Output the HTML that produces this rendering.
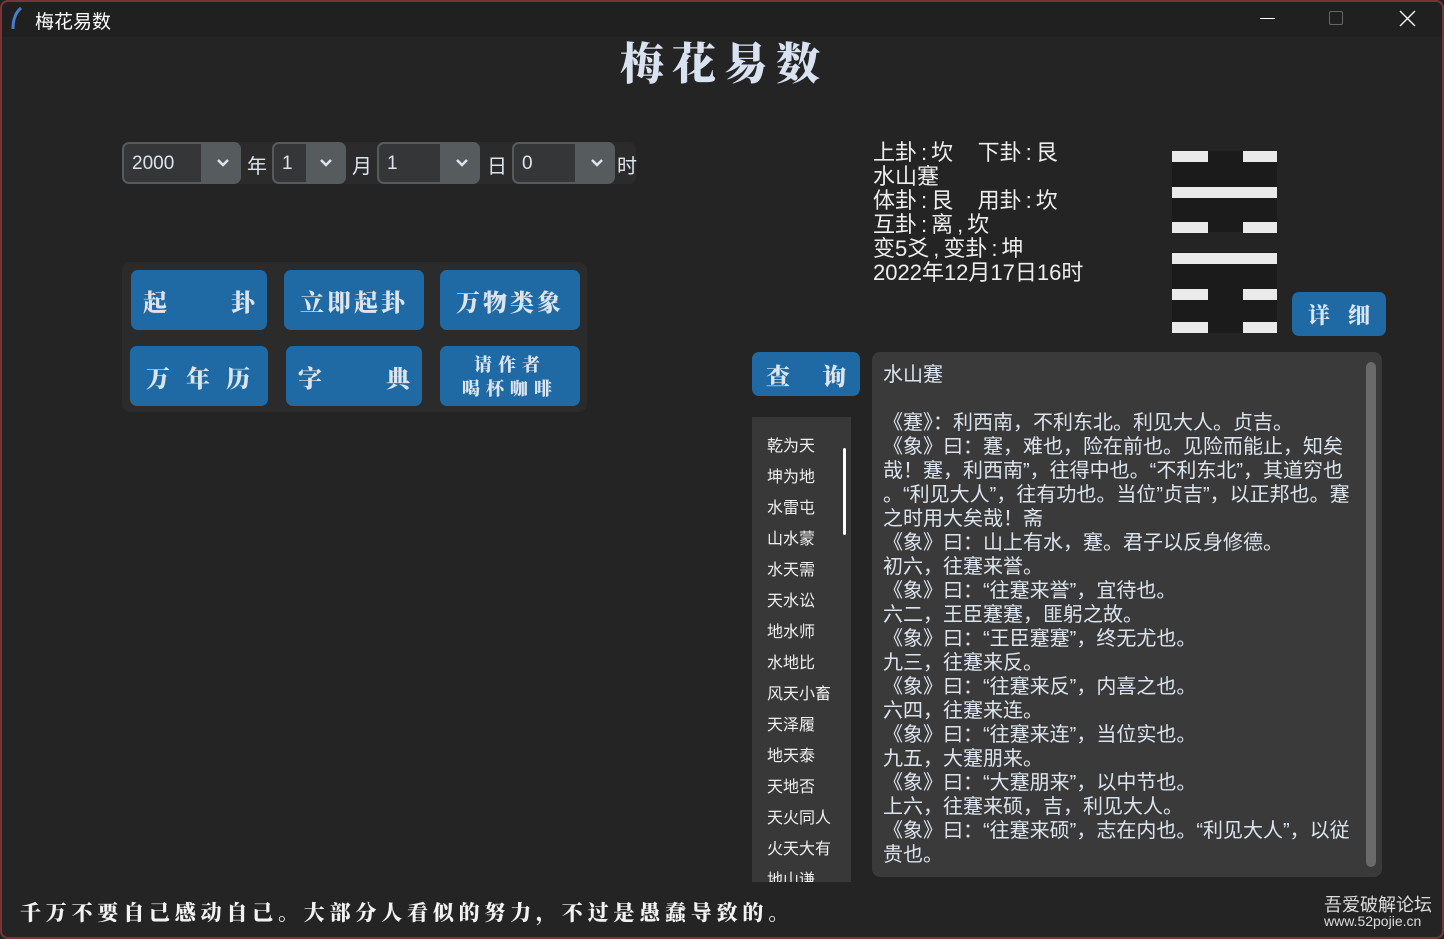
<!DOCTYPE html>
<html><head><meta charset="utf-8"><style>
*{margin:0;padding:0;box-sizing:border-box}
body{width:1444px;height:939px;background:#242424;overflow:hidden;position:relative;font-family:"Liberation Sans","Noto Sans CJK SC",sans-serif;color:#dce4ee}
.abs{position:absolute}
.frame{position:absolute;left:0;top:0;width:1444px;height:939px;border:2px solid #7a3436;border-radius:8px;pointer-events:none}
.title{left:0;top:0;width:1444px;height:37px;background:#202020}
.cal{font-family:"Noto Serif CJK SC","Liberation Serif",serif;font-weight:900}
.btn{position:absolute;background:#1f6aa5;border-radius:7px;color:#dce4ee;font-family:"Noto Serif CJK SC",serif;font-weight:900;font-size:24px;display:flex;align-items:center;white-space:nowrap}
.combo{position:absolute;top:142px;height:42px;border:2px solid #565b5e;border-radius:7px;background:#565b5e;overflow:hidden}
.combo .e{position:absolute;left:0;top:0;bottom:0;background:#343638;font-size:19px;line-height:40px;padding-left:8px;color:#dce4ee}
.combo svg{position:absolute;top:14px}
.lbl{position:absolute;top:150px;font-size:20px}
.info{left:873px;top:141px;font-size:22px;line-height:24px;color:#eee;white-space:nowrap}
.info i{font-style:normal;margin:0 4px}
.bar{position:absolute;background:#eaeaea;height:11px}
.txt{left:872px;top:352px;width:510px;height:525px;background:#3a3a3a;border-radius:8px}
.txt pre{position:absolute;left:11px;top:11px;font-family:"Liberation Sans","Noto Sans CJK SC",sans-serif;font-size:20px;line-height:24px;color:#dce4ee;white-space:pre}
.list{left:752px;top:417px;width:99px;height:465px;background:#383838;overflow:hidden}
.list div{position:absolute;left:15px;font-size:16px;color:#f0f0f0}
</style></head><body>
<div class="abs title"></div>
<svg class="abs" style="left:10px;top:7px" width="14" height="24" viewBox="0 0 14 24"><path d="M11 1 C5 6 3 14 3 22" stroke="#4a7bd0" stroke-width="3" fill="none"/><path d="M3 22 L2 24" stroke="#222" stroke-width="1.5"/></svg>
<div class="abs" style="left:35px;top:7px;font-size:19px;color:#fff">梅花易数</div>
<div class="abs" style="left:1260px;top:18px;width:15px;height:1px;background:#fff"></div>
<div class="abs" style="left:1329px;top:11px;width:14px;height:14px;border:1px solid #666;border-radius:2px"></div>
<svg class="abs" style="left:1399px;top:10px" width="17" height="17"><path d="M1 1L16 16M16 1L1 16" stroke="#fff" stroke-width="1.4"/></svg>

<div class="abs cal" style="left:620px;top:28px;font-size:44px;letter-spacing:8px;color:#d8e2f0">梅花易数</div>

<div class="abs" style="left:122px;top:142px;width:514px;height:42px;background:#2b2b2b;border-radius:7px"></div>
<div class="combo" style="left:122px;width:119px"><div class="e" style="width:77px">2000</div><svg style="left:92px" width="14" height="10"><path d="M2 2L7 7L12 2" stroke="#dce4ee" stroke-width="2.5" fill="none"/></svg></div>
<div class="lbl" style="left:247px">年</div>
<div class="combo" style="left:272px;width:74px"><div class="e" style="width:32px">1</div><svg style="left:45px" width="14" height="10"><path d="M2 2L7 7L12 2" stroke="#dce4ee" stroke-width="2.5" fill="none"/></svg></div>
<div class="lbl" style="left:352px">月</div>
<div class="combo" style="left:377px;width:103px"><div class="e" style="width:61px">1</div><svg style="left:76px" width="14" height="10"><path d="M2 2L7 7L12 2" stroke="#dce4ee" stroke-width="2.5" fill="none"/></svg></div>
<div class="lbl" style="left:487px">日</div>
<div class="combo" style="left:512px;width:103px"><div class="e" style="width:61px">0</div><svg style="left:76px" width="14" height="10"><path d="M2 2L7 7L12 2" stroke="#dce4ee" stroke-width="2.5" fill="none"/></svg></div>
<div class="lbl" style="left:617px">时</div>

<div class="abs" style="left:122px;top:262px;width:465px;height:150px;background:#2b2b2b;border-radius:8px"></div>
<div class="btn" style="left:131px;top:270px;width:136px;height:60px;justify-content:space-between;padding:0 12px">
<span>起</span><span>卦</span></div>
<div class="btn" style="left:284px;top:270px;width:140px;height:60px;justify-content:center;letter-spacing:3px">立即起卦</div>
<div class="btn" style="left:440px;top:270px;width:140px;height:60px;justify-content:center;letter-spacing:3px">万物类象</div>
<div class="btn" style="left:130px;top:346px;width:138px;height:60px;justify-content:center;letter-spacing:16px;padding-left:14px">万年历</div>
<div class="btn" style="left:286px;top:346px;width:136px;height:60px;justify-content:space-between;padding:0 12px">
<span>字</span><span>典</span></div>
<div class="btn" style="left:440px;top:346px;width:140px;height:60px;flex-direction:column;justify-content:center;font-size:18px;line-height:24px;letter-spacing:6px">
<span>请作者</span><span>喝杯咖啡</span></div>

<div class="abs info">上卦<i>:</i>坎&nbsp;&nbsp;&nbsp;&nbsp;下卦<i>:</i>艮<br>水山蹇<br>体卦<i>:</i>艮&nbsp;&nbsp;&nbsp;&nbsp;用卦<i>:</i>坎<br>互卦<i>:</i>离<i>,</i>坎<br>变5爻<i>,</i>变卦<i>:</i>坤<br>2022年12月17日16时</div>

<div class="abs" style="left:1172px;top:151px;width:105px;height:81px;background:#1b1b1b"></div>
<div class="abs" style="left:1172px;top:252px;width:105px;height:81px;background:#1b1b1b"></div>
<div class="bar" style="left:1172px;top:151px;width:36px"></div><div class="bar" style="left:1243px;top:151px;width:34px"></div>
<div class="bar" style="left:1172px;top:187px;width:105px"></div>
<div class="bar" style="left:1172px;top:222px;width:36px"></div><div class="bar" style="left:1243px;top:222px;width:34px"></div>
<div class="bar" style="left:1172px;top:253px;width:105px"></div>
<div class="bar" style="left:1172px;top:289px;width:36px"></div><div class="bar" style="left:1243px;top:289px;width:34px"></div>
<div class="bar" style="left:1172px;top:322px;width:36px"></div><div class="bar" style="left:1243px;top:322px;width:34px"></div>

<div class="btn" style="left:1292px;top:292px;width:94px;height:44px;justify-content:center;letter-spacing:18px;padding-left:18px;font-size:22px">详细</div>
<div class="btn" style="left:752px;top:352px;width:108px;height:44px;justify-content:space-between;padding:0 14px;font-size:24px"><span>查</span><span>询</span></div>

<div class="abs list">
<div style="top:15px">乾为天</div><div style="top:46px">坤为地</div><div style="top:77px">水雷屯</div><div style="top:108px">山水蒙</div><div style="top:139px">水天需</div><div style="top:170px">天水讼</div><div style="top:201px">地水师</div><div style="top:232px">水地比</div><div style="top:263px">风天小畜</div><div style="top:294px">天泽履</div><div style="top:325px">地天泰</div><div style="top:356px">天地否</div><div style="top:387px">天火同人</div><div style="top:418px">火天大有</div><div style="top:449px">地山谦</div>
<span style="position:absolute;left:91px;top:31px;width:3px;height:87px;background:#fff;border-radius:2px"></span>
</div>

<div class="abs txt"><pre>水山蹇

《蹇》：利西南，不利东北。利见大人。贞吉。
《象》曰：蹇，难也，险在前也。见险而能止，知矣
哉！蹇，利西南”，往得中也。“不利东北”，其道穷也
。“利见大人”，往有功也。当位”贞吉”，以正邦也。蹇
之时用大矣哉！斋
《象》曰：山上有水，蹇。君子以反身修德。
初六，往蹇来誉。
《象》曰：“往蹇来誉”，宜待也。
六二，王臣蹇蹇，匪躬之故。
《象》曰：“王臣蹇蹇”，终无尤也。
九三，往蹇来反。
《象》曰：“往蹇来反”，内喜之也。
六四，往蹇来连。
《象》曰：“往蹇来连”，当位实也。
九五，大蹇朋来。
《象》曰：“大蹇朋来”，以中节也。
上六，往蹇来硕，吉，利见大人。
《象》曰：“往蹇来硕”，志在内也。“利见大人”，以従
贵也。</pre>
<span style="position:absolute;left:494px;top:10px;width:10px;height:505px;background:#6a6a6a;border-radius:5px"></span></div>

<div class="abs cal" style="left:20px;top:897px;font-size:21px;letter-spacing:4.8px;color:#f2f2f2">千万不要自己感动自己。大部分人看似的努力，不过是愚蠢导致的。</div>
<div class="abs" style="left:1324px;top:891px;font-size:18px;color:#ddd">吾爱破解论坛</div>
<div class="abs" style="left:1324px;top:913px;font-size:14px;color:#ddd">www.52pojie.cn</div>
<div class="frame"></div>
</body></html>
